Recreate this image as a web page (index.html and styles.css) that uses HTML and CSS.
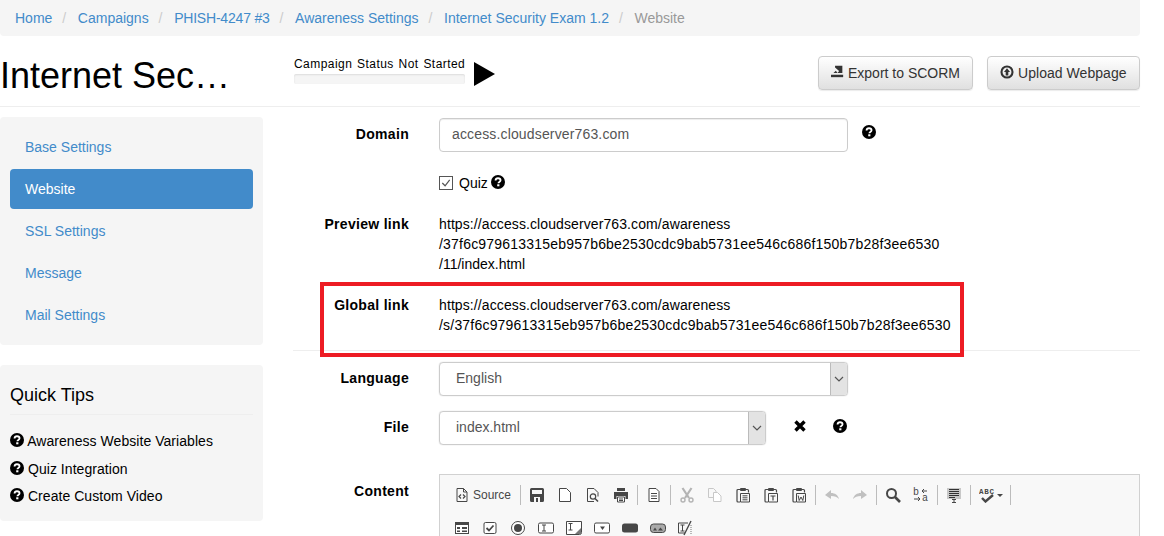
FILE: index.html
```html
<!DOCTYPE html>
<html lang="en">
<head>
<meta charset="utf-8">
<title>Website</title>
<link rel="stylesheet" href="styles.css">
</head>
<body>
<svg class="defs" width="0" height="0" aria-hidden="true">
  <symbol id="q" viewBox="0 0 16 16"><circle cx="8" cy="8" r="8" fill="#000"/><path d="M5.2 6.3C5.3 4.6 6.5 3.7 8 3.7c1.7 0 2.9 1 2.9 2.4 0 2-2.4 2-2.4 3.4" fill="none" stroke="#fff" stroke-width="2.1"/><rect x="7.1" y="10.6" width="2.5" height="2.3" fill="#fff"/></symbol>
  <symbol id="i-source" viewBox="0 0 16 16"><path d="M3 1.500h6.500l3.500 3.500v9.500H3z M9.500 1.500v3.500h3.500" fill="none" stroke="#474747"/><path d="M7 7.500l-2 2 2 2M9 7.500l2 2-2 2" fill="none" stroke="#474747" stroke-width="1.200"/></symbol>
  <symbol id="i-save" viewBox="0 0 16 16"><path d="M1 2.500A1.500 1.500 0 0 1 2.500 1h11A1.500 1.500 0 0 1 15 2.500v11a1.500 1.500 0 0 1-1.500 1.500h-11A1.500 1.500 0 0 1 1 13.500z" fill="#474747"/><rect x="3" y="3" width="10" height="4" fill="#f8f8f8"/><rect x="5" y="10" width="6" height="5" fill="#f8f8f8"/><rect x="7" y="11" width="2" height="4" fill="#474747"/></symbol>
  <symbol id="i-new" viewBox="0 0 16 16"><path d="M2.500 1.500h7l4 4v9h-11z" fill="#fff" stroke="#474747"/></symbol>
  <symbol id="i-preview" viewBox="0 0 16 16"><path d="M9 14.500H2.500v-13h6.500l4 4v4" fill="none" stroke="#474747"/><circle cx="8" cy="9.500" r="2.700" fill="none" stroke="#474747" stroke-width="1.200"/><path d="M10 11.500l3 3" stroke="#474747" stroke-width="1.600"/></symbol>
  <symbol id="i-print" viewBox="0 0 16 16"><path d="M4 1h8v3H4z" fill="#474747"/><path d="M1 5h14v7h-2.500V9h-9v3H1z" fill="#474747"/><path d="M4.500 10h7v5h-7z" fill="#fff" stroke="#474747"/><path d="M6 12h4M6 13.500h4" stroke="#474747"/></symbol>
  <symbol id="i-doc" viewBox="0 0 16 16"><path d="M3 1.500h7l3 3v10H3z" fill="#fff" stroke="#474747"/><path d="M5 6.500h6M5 9h6M5 11.500h6" stroke="#474747"/></symbol>
  <symbol id="i-cut" viewBox="0 0 16 16"><path d="M3.500 1l6.500 10M12.500 1L6 11" stroke="#b4b4b4" stroke-width="2.200"/><circle cx="4" cy="13" r="2" fill="none" stroke="#b4b4b4" stroke-width="1.400"/><circle cx="12" cy="13" r="2" fill="none" stroke="#b4b4b4" stroke-width="1.400"/></symbol>
  <symbol id="i-copy" viewBox="0 0 16 16"><path d="M1.500 1.500h5l2.500 2.500v6.500H1.500z" fill="#f8f8f8" stroke="#c8c8c8"/><path d="M6.500 5.500h4l3.500 3.500v5.500H6.500z" fill="#fff" stroke="#c8c8c8"/></symbol>
  <symbol id="i-paste" viewBox="0 0 16 16"><path d="M5 2.500H3a1 1 0 0 0-1 1v10.500a1 1 0 0 0 1 1h2M11 2.500h1.500a1 1 0 0 1 1 1v2" fill="none" stroke="#474747" stroke-width="1.200"/><rect x="5" y="1" width="6" height="3" rx="1" fill="#474747"/><path d="M5.500 6.500h9v8.500h-9z" fill="#f8f8f8" stroke="#474747"/><path d="M7.500 8.800h5M7.500 10.800h5M7.500 12.800h5" stroke="#474747"/></symbol>
  <symbol id="i-pastet" viewBox="0 0 16 16"><path d="M5 2.500H3a1 1 0 0 0-1 1v10.500a1 1 0 0 0 1 1h2M11 2.500h1.500a1 1 0 0 1 1 1v2" fill="none" stroke="#474747" stroke-width="1.200"/><rect x="5" y="1" width="6" height="3" rx="1" fill="#474747"/><path d="M5.500 6.500h9v8.500h-9z" fill="#f8f8f8" stroke="#474747"/><path d="M7.500 9h5M10 9v4.500" stroke="#474747" stroke-width="1.200"/></symbol>
  <symbol id="i-pastew" viewBox="0 0 16 16"><path d="M5 2.500H3a1 1 0 0 0-1 1v10.500a1 1 0 0 0 1 1h2M11 2.500h1.500a1 1 0 0 1 1 1v2" fill="none" stroke="#474747" stroke-width="1.200"/><rect x="5" y="1" width="6" height="3" rx="1" fill="#474747"/><path d="M5.500 6.500h9v8.500h-9z" fill="#f8f8f8" stroke="#474747"/><path d="M7.200 8.500l1 5 1.800-3.500 1.800 3.500 1-5" fill="none" stroke="#474747"/></symbol>
  <symbol id="i-undo" viewBox="0 0 16 16"><path d="M1 8l6-5v3c4 0 7 2 8 6-2-2-4-3-8-3v3z" fill="#c0c0c0"/></symbol>
  <symbol id="i-redo" viewBox="0 0 16 16"><path d="M15 8L9 3v3c-4 0-7 2-8 6 2-2 4-3 8-3v3z" fill="#c0c0c0"/></symbol>
  <symbol id="i-find" viewBox="0 0 16 16"><circle cx="6.500" cy="6.500" r="4.500" fill="none" stroke="#474747" stroke-width="2"/><path d="M10 10l5 5" stroke="#474747" stroke-width="2.600"/></symbol>
  <symbol id="i-selall" viewBox="0 0 16 16"><path d="M1 1h14v11H1z" fill="#c8c8c8"/><path d="M3 2.500h10M3 4.500h10M3 6.500h10M3 8.500h10M3 10.500h6" stroke="#333"/><path d="M6 12.500h4M8 12.500v3M6 15.500h4" stroke="#474747"/></symbol>
  <symbol id="i-form" viewBox="0 0 16 16"><path d="M1 2h14v12H1z" fill="#474747"/><path d="M2 5h12v8H2z" fill="#fff"/><path d="M3 7h3v2H3zM3 10.500h3v1.500H3zM8 7h5v2H8zM8 10.500h5v1.500H8z" fill="#474747"/></symbol>
  <symbol id="i-check" viewBox="0 0 16 16"><rect x="2" y="2.500" width="12" height="11" rx="1.500" fill="#fff" stroke="#474747"/><path d="M4.500 8l2.500 2.500 4.500-5" fill="none" stroke="#474747" stroke-width="1.800"/></symbol>
  <symbol id="i-radio" viewBox="0 0 16 16"><circle cx="8" cy="8" r="6.500" fill="#fff" stroke="#474747"/><circle cx="8" cy="8" r="4" fill="#474747"/></symbol>
  <symbol id="i-input" viewBox="0 0 16 16"><rect x=".5" y="3" width="15" height="10" rx="1.500" fill="#fff" stroke="#474747"/><path d="M4 5h4M4 11h4M6 5v6" stroke="#474747"/></symbol>
  <symbol id="i-area" viewBox="0 0 16 16"><path d="M.5 1.500h15v11a2 2 0 0 1-2 2H.5z" fill="#fff" stroke="#474747"/><path d="M2.500 3.500h4M2.500 10h4M4.500 3.500V10" stroke="#474747"/><path d="M9 14l6-6v6z" fill="#777"/></symbol>
  <symbol id="i-sel" viewBox="0 0 16 16"><rect x=".5" y="3" width="15" height="10" rx="1.500" fill="#fff" stroke="#474747"/><path d="M6 6.500h5L8.500 10z" fill="#474747"/></symbol>
  <symbol id="i-btn" viewBox="0 0 16 16"><rect y="3.500" width="16" height="9" rx="2.500" fill="#474747"/></symbol>
  <symbol id="i-imgbtn" viewBox="0 0 16 16"><rect x=".5" y="4" width="15" height="8.500" rx="3" fill="#aaa" stroke="#474747"/><path d="M3 10.500l2-3 2 3zM8 10.500l2.500-3 2.500 3z" fill="#474747"/></symbol>
  <symbol id="i-hidden" viewBox="0 0 16 16"><path d="M10 3H.5v10H7M2.500 5h4M2.500 11h4M4.500 5v6" fill="none" stroke="#474747"/><path d="M6 15L13 1" stroke="#474747" stroke-width="1.400"/><path d="M13 5v9" stroke="#777" stroke-dasharray="1 1"/></symbol>
</svg>

<div class="page">
  <ol class="breadcrumb">
    <li><a href="#">Home</a></li>
    <li><a href="#">Campaigns</a></li>
    <li><a href="#" class="tight">PHISH-4247 #3</a></li>
    <li><a href="#">Awareness Settings</a></li>
    <li><a href="#">Internet Security Exam 1.2</a></li>
    <li class="current">Website</li>
  </ol>

  <header class="head">
    <h1 class="title">Internet Sec…</h1>
    <div class="status">
      <div class="status-text">
        <div class="status-label">Campaign Status Not Started</div>
        <div class="progress"></div>
      </div>
      <div class="play"></div>
    </div>
    <div class="actions">
      <a class="btn btn-export" href="#">
        <svg class="btn-icon" viewBox="0 0 16 16"><path d="M0 12h15v3H0z" fill="#333"/><path d="M5 1h9v9H8l2-2.500L5 3z M3 10l3-3 2 3z" fill="#333"/></svg>
        Export to SCORM
      </a>
      <a class="btn btn-upload" href="#">
        <svg class="btn-icon up" viewBox="0 0 16 16"><circle cx="8" cy="8" r="6.300" fill="none" stroke="#333" stroke-width="2.400"/><path d="M8 3.800L11.500 8H9.500v4h-3V8H4.500z" fill="#333"/></svg>
        Upload Webpage
      </a>
    </div>
  </header>

  <div class="main">
    <aside class="side">
      <nav class="panel nav">
        <a href="#">Base Settings</a>
        <a href="#" class="active">Website</a>
        <a href="#">SSL Settings</a>
        <a href="#">Message</a>
        <a href="#">Mail Settings</a>
      </nav>
      <section class="panel tips">
        <h3 class="tips-title">Quick Tips</h3>
        <ul class="tips-list">
          <li><svg class="q"><use href="#q"/></svg> Awareness Website Variables</li>
          <li><svg class="q"><use href="#q"/></svg> Quiz Integration</li>
          <li><svg class="q"><use href="#q"/></svg> Create Custom Video</li>
        </ul>
      </section>
    </aside>

    <form class="form">
      <div class="row r-domain">
        <label class="lbl lbl-input">Domain</label>
        <div class="field">
          <div class="input">access.cloudserver763.com</div>
          <svg class="q q-side"><use href="#q"/></svg>
        </div>
      </div>
      <div class="row r-quiz">
        <span></span>
        <div class="quiz"><span class="box"><svg viewBox="0 0 13 13"><path d="M2.500 6.500l3 3 5-6.500" fill="none" stroke="#555" stroke-width="1.300"/></svg></span> Quiz <svg class="q"><use href="#q"/></svg></div>
      </div>
      <div class="row r-text">
        <label class="lbl">Preview link</label>
        <div class="links"><span class="url">https://access.cloudserver763.com/awareness</span><br><span class="hash">/37f6c979613315eb957b6be2530cdc9bab5731ee546c686f150b7b28f3ee6530</span><br>/11/index.html</div>
      </div>
      <div class="row r-text">
        <label class="lbl">Global link</label>
        <div class="links"><span class="url">https://access.cloudserver763.com/awareness</span><br><span class="hash">/s/37f6c979613315eb957b6be2530cdc9bab5731ee546c686f150b7b28f3ee6530</span></div>
      </div>
      <hr class="rule">
      <div class="row r-lang">
        <label class="lbl lbl-input">Language</label>
        <div class="select lang"><span>English</span><i class="arrow"><svg viewBox="0 0 10 6"><path d="M1 1l4 4 4-4" fill="none" stroke="#555" stroke-width="1.200"/></svg></i></div>
      </div>
      <div class="row r-file">
        <label class="lbl lbl-input">File</label>
        <div class="field">
          <div class="select file"><span>index.html</span><i class="arrow"><svg viewBox="0 0 10 6"><path d="M1 1l4 4 4-4" fill="none" stroke="#555" stroke-width="1.200"/></svg></i></div>
          <svg class="x" viewBox="0 0 12 12"><path d="M1.500 1.500l9 9M10.500 1.500l-9 9" stroke="#000" stroke-width="3.400"/></svg>
          <svg class="q q-file"><use href="#q"/></svg>
        </div>
      </div>
      <div class="row r-content">
        <label class="lbl lbl-editor">Content</label>
        <div class="editor">
          <div class="bar">
            <span class="tb source"><svg><use href="#i-source"/></svg>Source</span><i class="sep"></i>
            <span class="tb"><svg><use href="#i-save"/></svg></span>
            <span class="tb"><svg><use href="#i-new"/></svg></span>
            <span class="tb"><svg><use href="#i-preview"/></svg></span>
            <span class="tb"><svg><use href="#i-print"/></svg></span><i class="sep"></i>
            <span class="tb"><svg><use href="#i-doc"/></svg></span><i class="sep"></i>
            <span class="tb"><svg><use href="#i-cut"/></svg></span>
            <span class="tb"><svg><use href="#i-copy"/></svg></span>
            <span class="tb"><svg><use href="#i-paste"/></svg></span>
            <span class="tb"><svg><use href="#i-pastet"/></svg></span>
            <span class="tb"><svg><use href="#i-pastew"/></svg></span><i class="sep"></i>
            <span class="tb"><svg><use href="#i-undo"/></svg></span>
            <span class="tb"><svg><use href="#i-redo"/></svg></span><i class="sep"></i>
            <span class="tb"><svg><use href="#i-find"/></svg></span>
            <span class="tb"><svg class="rep-icon" viewBox="0 0 16 16"><text x="0" y="8" class="rep">b</text><text x="9" y="14" class="rep">a</text><path d="M14 4H9M11 2L9 4l2 2M1 12h6M5 10l2 2-2 2" fill="none" stroke="#474747"/></svg></span><i class="sep"></i>
            <span class="tb"><svg><use href="#i-selall"/></svg></span><i class="sep"></i>
            <span class="tb spell"><svg viewBox="0 0 16 16"><text x="0" y="7" class="abc" textLength="15">ABC</text><path d="M3 11l3.500 3.500L14 8" fill="none" stroke="#474747" stroke-width="2.400"/></svg><b class="caret"></b></span><i class="sep"></i>
          </div>
          <div class="bar bar2">
            <span class="tb"><svg><use href="#i-form"/></svg></span>
            <span class="tb"><svg><use href="#i-check"/></svg></span>
            <span class="tb"><svg><use href="#i-radio"/></svg></span>
            <span class="tb"><svg><use href="#i-input"/></svg></span>
            <span class="tb"><svg><use href="#i-area"/></svg></span>
            <span class="tb"><svg><use href="#i-sel"/></svg></span>
            <span class="tb"><svg><use href="#i-btn"/></svg></span>
            <span class="tb"><svg><use href="#i-imgbtn"/></svg></span>
            <span class="tb"><svg><use href="#i-hidden"/></svg></span>
          </div>
        </div>
      </div>
      <div class="highlight"></div>
    </form>
  </div>
</div>
</body>
</html>
```

FILE: styles.css
```css
* { box-sizing: border-box; }
html, body { margin: 0; padding: 0; height: 536px; overflow: hidden; background: #fff; }
body { font-family: "Liberation Sans", Arial, sans-serif; font-size: 14px; line-height: 20px; color: #000; }
a { color: #428bca; text-decoration: none; }
.defs { position: absolute; }
.abc { font-family: "Liberation Mono", monospace; font-size: 7.500px; font-weight: 700; fill: #474747; }
.rep { font-family: "Liberation Mono", monospace; font-size: 10px; fill: #474747; }
.page { width: 1140px; }

.breadcrumb { margin: 0; height: 36px; padding: 8px 15px; list-style: none; background: #f5f5f5; border-radius: 0 0 4px 4px; }
.breadcrumb li { display: inline-block; }
.breadcrumb li + li::before { content: "/\00a0"; padding: 0 7.800px 0 6px; color: #ccc; }
.breadcrumb .tight { letter-spacing: -.2px; }
.breadcrumb .current { color: #999; }

.head { display: flex; align-items: flex-start; height: 71px; border-bottom: 1px solid #eee; }
.title { margin: 20px 0 0; width: 294px; font-size: 36px; line-height: 40px; font-weight: 400; color: #000; }
.status { display: flex; align-items: flex-start; }
.status-text { width: 171px; }
.status-label { margin-top: 20px; font-size: 12px; line-height: 16px; word-spacing: 1px; letter-spacing: .45px; white-space: nowrap; }
.progress { height: 10px; margin-top: 2px; background: #f5f5f5; border-radius: 2px; box-shadow: inset 0 1px 2px rgba(0,0,0,.1); }
.play { margin: 26px 0 0 9px; width: 0; height: 0; border-style: solid; border-width: 12.500px 0 12.500px 21px; border-color: transparent transparent transparent #000; }
.actions { margin-left: auto; margin-top: 20px; display: flex; gap: 14px; }
.btn { display: flex; align-items: center; height: 34px; padding: 0 12px; color: #333; border: 1px solid #ccc; border-radius: 4px; background: linear-gradient(#fff, #e0e0e0); box-shadow: 0 1px 1px rgba(0,0,0,.08); white-space: nowrap; }
.btn-export { gap: 4px; width: 155px; }
.btn-upload { gap: 4px; width: 153px; letter-spacing: .05px; }
.btn-icon { width: 15px; height: 15px; margin-top: -3px; }
.btn-icon.up { width: 14px; height: 14px; }

.main { display: flex; gap: 30px; padding-top: 10px; }
.side { width: 263px; flex: none; display: flex; flex-direction: column; gap: 20px; }
.panel { background: #f5f5f5; border-radius: 4px; }
.nav { display: flex; flex-direction: column; gap: 2px; padding: 10px; }
.nav a { display: block; height: 40px; padding: 10px 15px; border-radius: 4px; }
.nav a.active { color: #fff; background: #428bca; }
.tips { height: 156px; padding: 20px 10px 0; }
.tips-title { margin: 0; padding-bottom: 9px; border-bottom: 1px solid #eee; font-size: 18px; line-height: 20px; font-weight: 400; height: 30px; }
.tips-list { list-style: none; margin: 16px 0 0; padding: 0; letter-spacing: .05px; }
.tips-list li { height: 27.500px; }
.q { width: 14px; height: 14px; vertical-align: -1px; }

.form { position: relative; flex: 1; margin-top: 1px; min-width: 0; }
.row { display: grid; grid-template-columns: 116px 1fr; column-gap: 30px; }
.lbl { font-weight: 700; text-align: right; color: #000; letter-spacing: .3px; }
.lbl-input { padding-top: 6px; }
.field { display: flex; align-items: flex-start; }
.input { width: 409px; height: 34px; padding: 5px 12px; color: #555; border: 1px solid #ccc; border-radius: 4px; box-shadow: inset 0 1px 1px rgba(0,0,0,.075); letter-spacing: .15px; }
.q-side { margin: 7px 0 0 14px; }
.r-quiz { margin-top: 21px; }
.quiz { display: flex; align-items: center; height: 20px; gap: 0; color: #000; }
.box { width: 14px; height: 14px; margin-right: 6px; border: 1px solid #555; display: block; background: #fff; }
.box svg { display: block; width: 12px; height: 12px; }
.quiz .q { margin: -2px 0 0 3px; }
.r-text { margin-top: 21px; }
.links { color: #000; white-space: nowrap; }
.url { letter-spacing: .1px; }
.hash { letter-spacing: .2px; }
.rule { margin: 15px 0 0; height: 0; border: 0; border-top: 1px solid #eee; }
.r-lang { margin-top: 11px; }
.r-file { margin-top: 15px; }
.select { display: flex; justify-content: space-between; height: 34px; color: #555; border: 1px solid #ccc; border-radius: 4px; padding-left: 16px; line-height: 30px; box-shadow: 0 0 1px #bbb; overflow: hidden; }
.lang { width: 409px; }
.file { width: 327px; }
.arrow { width: 17px; background: #e3e3e3; border-left: 1px solid #bbb; display: flex; align-items: center; justify-content: center; }
.arrow svg { width: 10px; height: 6px; }
.x { width: 12px; height: 12px; margin: 9px 0 0 28px; }
.q-file { margin: 8px 0 0 27px; }
.r-content { margin-top: 29px; }
.lbl-editor { padding-top: 7px; }
.editor { height: 70px; overflow: hidden; background: #f8f8f8; border: 1px solid #d1d1d1; border-bottom: 0; }
.bar { display: flex; align-items: center; height: 28px; margin-top: 6px; padding-left: 7px; }
.bar2 { margin-top: 5px; padding-left: 8px; }
.tb { display: flex; align-items: center; justify-content: center; width: 28px; height: 28px; color: #474747; font-size: 12px; flex: none; }
.tb svg { width: 16px; height: 16px; display: block; }
.source { width: 71px; justify-content: flex-start; padding-left: 7px; gap: 3px; }
.spell { width: 35px; gap: 2px; }
.caret { width: 0; height: 0; border-style: solid; border-width: 3px 3px 0; border-color: #474747 transparent transparent; }
.sep { width: 1px; height: 20px; background: #bcbcbc; margin: 0 2px; flex: none; }
.highlight { position: absolute; left: 27px; top: 164px; width: 644px; height: 75px; border: 4px solid #ed1c24; pointer-events: none; }
```
